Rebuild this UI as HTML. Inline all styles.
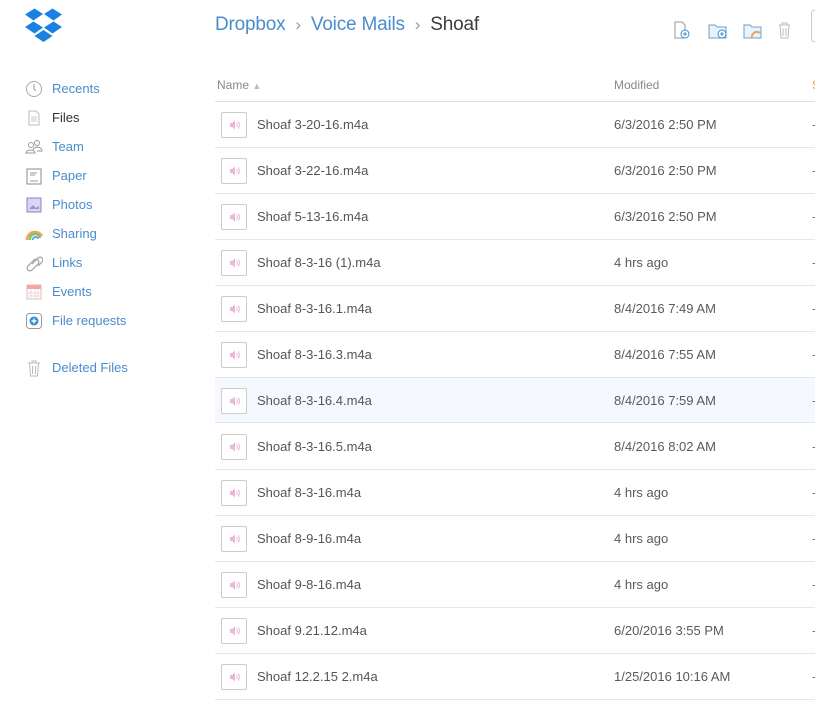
<!DOCTYPE html>
<html><head><style>
*{margin:0;padding:0;box-sizing:border-box}
body{width:815px;height:706px;overflow:hidden;background:#fff;font-family:"Liberation Sans",sans-serif;position:relative}
.nav{position:absolute;left:25px;top:74px}
.nav div{height:29px;display:flex;align-items:center;font-size:13px;color:#4a8ccc}
.nav svg{width:18px;height:18px;margin-right:9px}
.bc{position:absolute;left:215px;top:14px;font-size:19px;color:#4a8ccc;letter-spacing:-0.2px}
.bc .s{color:#999;font-size:17px;margin:0 10px}
.bc .c{color:#3d3d3d}
.th{position:absolute;left:215px;top:74px;width:600px;height:28px;border-bottom:1px solid #ddd;font-size:12px;color:#888}
.row{position:absolute;left:215px;width:600px;height:46px;border-bottom:1px solid #e6e6e6;font-size:13px;color:#555}
.row.h{background:#f5f9fd;border-top:1px solid #dae8f4;border-bottom:1px solid #dae8f4}
.ic{position:absolute;left:6px;top:10px;width:26px;height:26px;border:1px solid #ccc;border-radius:2px;background:#fff}
.nm{position:absolute;left:42px;top:15px}
.md{position:absolute;left:399px;top:15px;color:#5a5a5a}
.ds{position:absolute;left:597px;top:15px;color:#777}
</style></head><body>
<svg style="position:absolute;left:25px;top:8px" width="37" height="34" viewBox="0 0 37 34"><g fill="#1a81e2">
<polygon points="0,6.5 9.5,0.5 18,6 8.5,12.5"/><polygon points="19,6 27.5,0.5 37,6.5 28.5,12.5"/>
<polygon points="0,19 8.5,13.5 18,19.5 9.5,25.5"/><polygon points="19,19.5 28.5,13.5 37,19 27.5,25.5"/>
<polygon points="9.5,28 18.5,22 27.5,28 18.5,34"/></g></svg>
<div class="nav">
<div><svg viewBox="0 0 18 18"><circle cx="9" cy="9" r="7.5" fill="none" stroke="#aaa"/><path d="M9 4v5l2 2" stroke="#999" fill="none"/></svg>Recents</div>
<div style="color:#333"><svg viewBox="0 0 18 18"><path d="M4 2h7l3 3v11H4z" fill="none" stroke="#bbb"/><path d="M6 8h6M6 10h6M6 12h6" stroke="#ccc"/></svg>Files</div>
<div><svg viewBox="0 0 18 18"><circle cx="6" cy="7" r="2.5" fill="none" stroke="#999"/><circle cx="12" cy="5" r="2.5" fill="none" stroke="#999"/><path d="M1 15c0-4 9-4 9 0zM8 12c1-4 9-4 9 1h-5" fill="none" stroke="#999"/></svg>Team</div>
<div><svg viewBox="0 0 18 18"><rect x="2" y="2" width="14" height="15" fill="none" stroke="#888"/><path d="M5 6h7M5 8h5M5 14h8" stroke="#999"/></svg>Paper</div>
<div><svg viewBox="0 0 18 18"><rect x="2" y="2" width="14" height="14" fill="#d9d6f2" stroke="#8a84c9"/><path d="M4 13l4-4 3 3 3-2v3z" fill="#9c93d6"/></svg>Photos</div>
<div><svg viewBox="0 0 18 18"><path d="M2 15a8 8 0 0 1 15-4" stroke="#f5a25c" stroke-width="2.5" fill="none"/><path d="M5 15a5 5 0 0 1 10-2" stroke="#7cc46a" stroke-width="2.5" fill="none"/><path d="M8 15a2.5 2.5 0 0 1 5-1" stroke="#6aa7e0" stroke-width="2" fill="none"/></svg>Sharing</div>
<div><svg viewBox="0 0 18 18"><path d="M3 12l6-6a2.5 2.5 0 0 1 4 4l-6 6a2.5 2.5 0 0 1-4-4zM7 10l6-6a2.5 2.5 0 0 1 4 4l-4 4" fill="none" stroke="#aaa" stroke-width="1.3"/></svg>Links</div>
<div><svg viewBox="0 0 18 18"><rect x="2" y="2" width="14" height="14" fill="#fff" stroke="#e6b8b8"/><rect x="2" y="2" width="14" height="4" fill="#f2a8a8"/><path d="M2 10h14M2 13h14M6 6v10M10 6v10M13 6v10" stroke="#eadada"/></svg>Events</div>
<div><svg viewBox="0 0 18 18"><rect x="1.5" y="1.5" width="15" height="15" rx="3" fill="none" stroke="#999"/><circle cx="9" cy="9" r="4.5" fill="#2f8fd6"/><path d="M9 6.5v5M6.5 9h5" stroke="#fff" stroke-width="1.4"/></svg>File requests</div>
<div style="height:18px"></div>
<div><svg viewBox="0 0 18 18"><path d="M3 4h12M7 4V2h4v2M4.5 4l1 13h7l1-13M7.5 7v8M10.5 7v8" fill="none" stroke="#bbb"/></svg>Deleted Files</div>
</div>
<div class="bc">Dropbox<span class="s">›</span>Voice Mails<span class="s">›</span><span class="c">Shoaf</span></div>
<svg style="position:absolute;left:672px;top:20px" width="125" height="20" viewBox="0 0 125 20">
<path d="M3 2h7l3 3v13H3z" fill="none" stroke="#999"/><circle cx="13" cy="14" r="4" fill="#fff" stroke="#3d8fd0"/><path d="M13 12v4M11 14h4" stroke="#3d8fd0"/>
<path d="M37 5h6l2 2h9v11H37z" fill="#eaf3fb" stroke="#6aa0cf"/><circle cx="50" cy="14" r="4" fill="#fff" stroke="#3d8fd0"/><path d="M50 12v4M48 14h4" stroke="#3d8fd0"/>
<path d="M72 5h6l2 2h9v11H72z" fill="#eaf3fb" stroke="#6aa0cf"/><path d="M80 18a5 5 0 0 1 8-5" stroke="#e7a85c" stroke-width="2" fill="none"/>
<path d="M107 5h11M110 5V3h5v2M108 5l1 13h7l1-13M111 8v8M114 8v8" fill="none" stroke="#bbb"/></svg>
<div style="position:absolute;left:811px;top:10px;width:10px;height:32px;border:1px solid #ccc;border-radius:3px"></div>
<div class="th"><span style="position:absolute;left:2px;top:4px">Name <span style="color:#bbb;font-size:9px">&#9650;</span></span><span style="position:absolute;left:399px;top:4px">Modified</span><span style="position:absolute;left:597px;top:4px;color:#e8a040">S</span></div>
<div id="rows"></div>
<script>
var d=[["Shoaf 3-20-16.m4a","6/3/2016 2:50 PM"],["Shoaf 3-22-16.m4a","6/3/2016 2:50 PM"],["Shoaf 5-13-16.m4a","6/3/2016 2:50 PM"],["Shoaf 8-3-16 (1).m4a","4 hrs ago"],["Shoaf 8-3-16.1.m4a","8/4/2016 7:49 AM"],["Shoaf 8-3-16.3.m4a","8/4/2016 7:55 AM"],["Shoaf 8-3-16.4.m4a","8/4/2016 7:59 AM"],["Shoaf 8-3-16.5.m4a","8/4/2016 8:02 AM"],["Shoaf 8-3-16.m4a","4 hrs ago"],["Shoaf 8-9-16.m4a","4 hrs ago"],["Shoaf 9-8-16.m4a","4 hrs ago"],["Shoaf 9.21.12.m4a","6/20/2016 3:55 PM"],["Shoaf 12.2.15 2.m4a","1/25/2016 10:16 AM"]];
var h="";d.forEach(function(r,i){h+='<div class="row'+(i==6?' h':'')+'" style="top:'+(102+i*46-(i==6?1:0))+'px"><div class="ic"><svg width="24" height="24" viewBox="0 0 24 24"><path d="M8 10h2l3-2.5v9L10 14H8z" fill="#e7b8d8"/><path d="M14.5 10a3 3 0 0 1 0 4M16 8.5a5 5 0 0 1 0 7" stroke="#e7b8d8" fill="none"/></svg></div><div class="nm">'+r[0]+'</div><div class="md">'+r[1]+'</div><div class="ds">-</div></div>'});
document.getElementById("rows").innerHTML=h;
</script>
</body></html>
